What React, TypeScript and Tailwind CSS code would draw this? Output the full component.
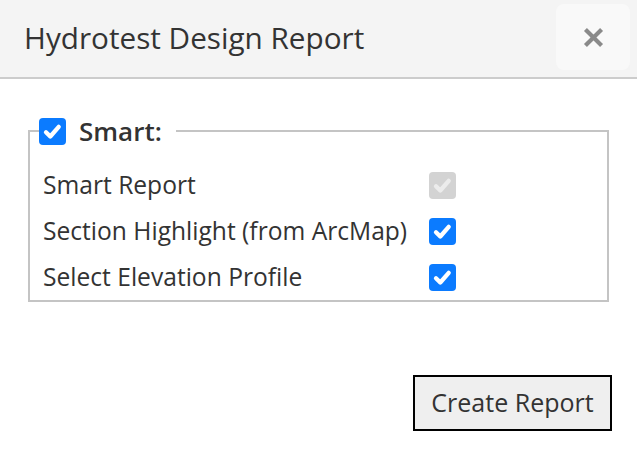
import React from 'react';

const Check: React.FC<{ disabled?: boolean }> = ({ disabled }) => (
  <span
    className={`flex h-[27px] w-[27px] items-center justify-center rounded-[4px] ${
      disabled ? 'bg-[#d3d3d3]' : 'bg-[#0b7bff]'
    }`}
  >
    <svg viewBox="0 0 27 27" className="h-[27px] w-[27px]">
      <path
        d="M7 14.2l4.3 4.3 8.4-9.6"
        fill="none"
        stroke={disabled ? '#ececec' : '#ffffff'}
        strokeWidth="4.3"
        strokeLinecap="round"
        strokeLinejoin="round"
      />
    </svg>
  </span>
);

const rows = [
  { label: 'Smart Report', disabled: true },
  { label: 'Section Highlight (from ArcMap)', disabled: false },
  { label: 'Select Elevation Profile', disabled: false },
];

export default function App() {
  return (
    <div className="h-[465px] w-[637px] bg-white text-[#333] [font-family:'Open_Sans',sans-serif]">
      {/* Header */}
      <div className="flex h-[79px] items-center justify-between border-b-2 border-[#cccccc] bg-[#f4f4f4] pl-6 pr-[7px]">
        <h1 className="pb-[2px] text-[29.7px] font-normal leading-none">Hydrotest Design Report</h1>
        <button className="mt-[4px] flex h-[66px] w-[74px] items-center justify-center self-start rounded-[8px] bg-[#f9f9f9]">
          <svg viewBox="0 0 20 20" className="h-[23px] w-[23px]">
            <path d="M3 3L17 17M17 3L3 17" stroke="#8a8a8a" strokeWidth="3.6" />
          </svg>
        </button>
      </div>

      {/* Smart fieldset */}
      <fieldset className="ml-[28px] mt-[37px] w-[581px] border-2 border-[#c4c4c4] pb-0 pl-[9px] pt-0">
        <legend className="flex h-[30px] items-center gap-[13px] pr-[14px]">
          <Check />
          <span className="text-[26px] font-semibold leading-none">Smart:</span>
        </legend>
        <div className="pl-1 pt-[16px]">
          {rows.map((r) => (
            <div key={r.label} className="flex h-[46px] items-center">
              <span className="w-[386px] text-[24.6px] leading-none">{r.label}</span>
              <Check disabled={r.disabled} />
            </div>
          ))}
        </div>
      </fieldset>

      {/* Footer */}
      <div className="mt-[73px] flex justify-end pr-[25px]">
        <button className="h-[56px] w-[199px] border-2 border-black bg-[#efefef] text-[25px] text-[#333]">
          Create Report
        </button>
      </div>
    </div>
  );
}
